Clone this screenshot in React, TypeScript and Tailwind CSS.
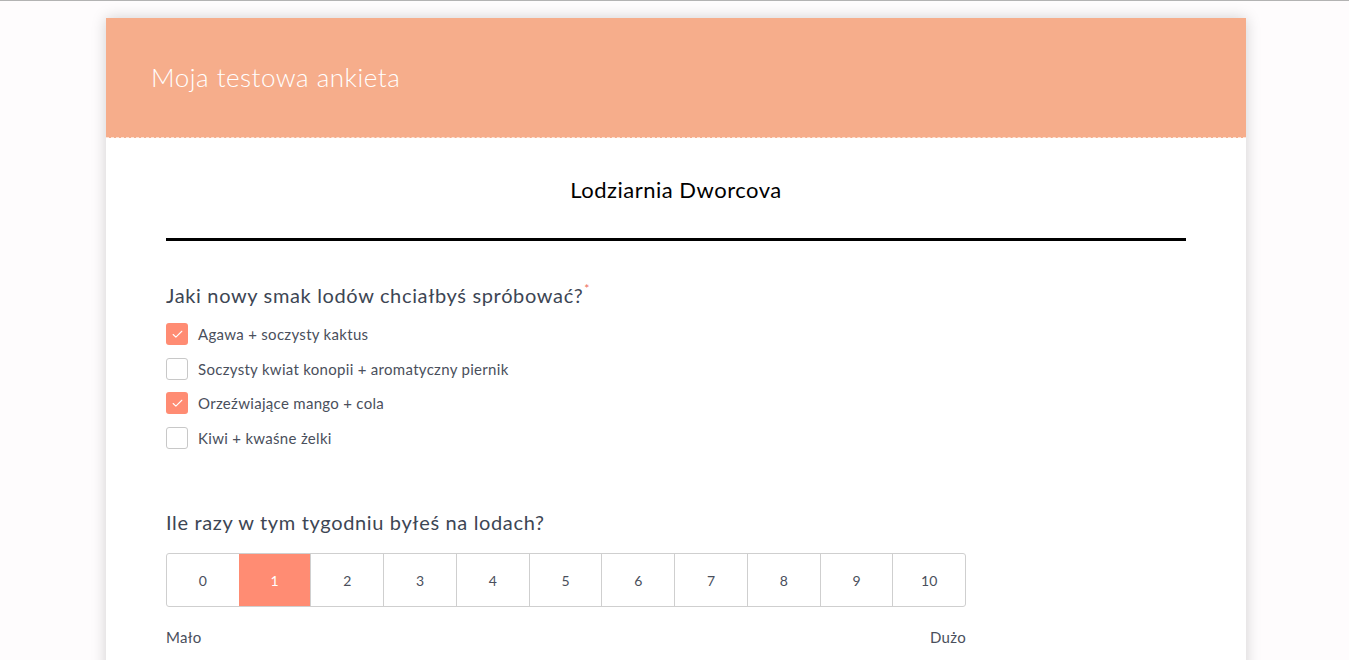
import { Check } from "lucide-react";

const options = [
  { label: "Agawa + soczysty kaktus", checked: true },
  { label: "Soczysty kwiat konopii + aromatyczny piernik", checked: false },
  { label: "Orzeźwiające mango + cola", checked: true },
  { label: "Kiwi + kwaśne żelki", checked: false },
];

const scale = [0, 1, 2, 3, 4, 5, 6, 7, 8, 9, 10];

const App = () => {
  return (
    <div
      className="min-h-screen bg-[#fefcfd] border-t border-[#b3b3b3] pt-[17px]"
      style={{ fontFamily: "Lato, 'Noto Sans', sans-serif" }}
    >
      <div className="ml-[106px] w-[1140px] bg-white shadow-[0_0_14px_rgba(0,0,0,0.18)]">
        {/* Header */}
        <div className="h-[120px] bg-[#f6ad8b] border-b border-dashed border-[#fde3d6] flex items-center px-[45px]">
          <h1 className="text-[26px] font-light text-white tracking-[0.5px]">Moja testowa ankieta</h1>
        </div>

        <div className="px-[60px] pb-10">
          <div className="pt-[35px] pb-[32px] text-center text-[22px] text-black tracking-[0.5px]">
            Lodziarnia Dworcova
          </div>
          <div className="h-[3px] bg-black" />

          {/* Question 1 */}
          <div className="mt-[39px]">
            <h2 className="text-[20px] text-[#3d4654] tracking-[0.65px]">
              Jaki nowy smak lodów chciałbyś spróbować?
              <span className="text-[#ee6a5a] text-[12px] align-top ml-[1px]">*</span>
            </h2>
            <div className="mt-[13px] flex flex-col gap-[12px]">
              {options.map((o) => (
                <label
                  key={o.label}
                  className="flex items-center gap-[10px] text-[15px] text-[#4a4f5c] tracking-[0.3px]"
                >
                  <span
                    className={
                      o.checked
                        ? "w-[22px] h-[22px] rounded-[3px] bg-[#ff8c73] flex items-center justify-center"
                        : "w-[22px] h-[22px] rounded-[3px] border border-[#c8c8c8] bg-white"
                    }
                  >
                    {o.checked && <Check className="w-[13px] h-[13px] text-white" strokeWidth={2} />}
                  </span>
                  {o.label}
                </label>
              ))}
            </div>
          </div>

          {/* Question 2 */}
          <div className="mt-[58px] w-[800px]">
            <h2 className="text-[20px] text-[#3d4654] tracking-[0.65px]">Ile razy w tym tygodniu byłeś na lodach?</h2>
            <div className="mt-[16px] flex h-[54px] border border-[#cfcfcf] rounded-[3px] overflow-hidden">
              {scale.map((n) => (
                <div
                  key={n}
                  className={
                    n === 1
                      ? "flex-1 flex items-center justify-center bg-[#ff8c73] text-white text-[14px]"
                      : "flex-1 flex items-center justify-center border-l border-[#cfcfcf] first:border-l-0 text-[14px] text-[#4a4f5c]"
                  }
                >
                  {n}
                </div>
              ))}
            </div>
            <div className="mt-[19px] flex justify-between text-[15px] text-[#4a4f5c] tracking-[0.3px]">
              <span>Mało</span>
              <span>Dużo</span>
            </div>
          </div>
        </div>
      </div>
    </div>
  );
};

export default App;
